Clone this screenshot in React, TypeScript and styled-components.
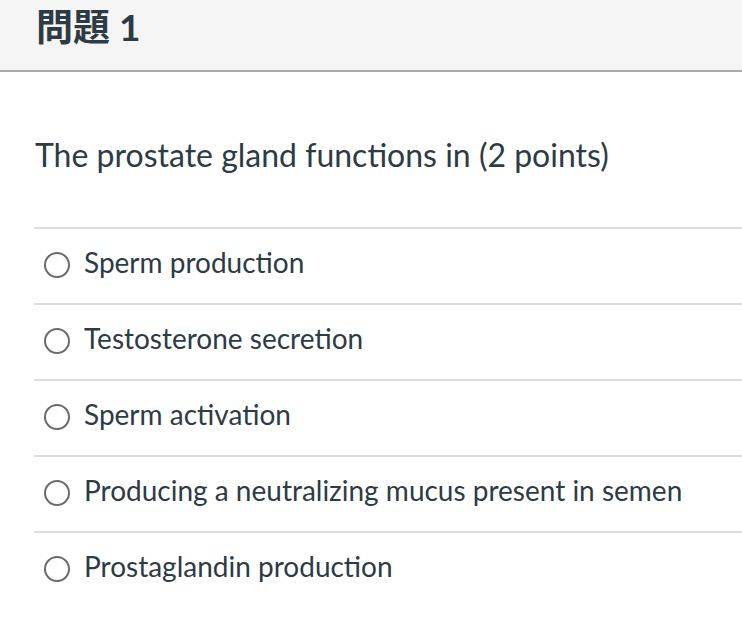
import React from "react";
import styled, { createGlobalStyle } from "styled-components";

const Global = createGlobalStyle`
  html, body { margin: 0; padding: 0; background: #fff; }
  body { font-family: Lato, "Noto Sans CJK TC", sans-serif; color: #2d3b45; }
`;

const Header = styled.header`
  height: 70px;
  background: #f5f5f5;
  border-bottom: 2px solid #aaaaaa;
  padding-left: 36px;
  display: flex;
  align-items: flex-start;
  box-sizing: content-box;
`;

const Title = styled.h2`
  margin: 0;
  padding-top: 5px;
  font-size: 37px;
  line-height: 44px;
  font-weight: 700;
  font-family: Lato, "Noto Sans CJK TC", sans-serif;
  color: #2d3b45;
`;

const Body = styled.div`
  padding: 61px 0 0 34px;
`;

const Question = styled.p`
  margin: 0 0 0 1px;
  font-size: 32px;
  line-height: 44px;
  height: 94px;
`;

const Answers = styled.ul`
  list-style: none;
  margin: 0;
  padding: 0;
`;

const Answer = styled.li`
  box-sizing: border-box;
  border-top: 2px solid #dddddd;
  height: 76px;
  display: flex;
  align-items: center;
  gap: 14px;
  padding-left: 10px;
  padding-bottom: 3px;
`;

const Radio = styled.span`
  width: 22px;
  height: 22px;
  border: 2px solid #6b6b6b;
  border-radius: 50%;
  flex: none;
`;

const Label = styled.span`
  font-size: 28px;
  line-height: 34px;
  padding-bottom: 5px;
`;

const options = [
  "Sperm production",
  "Testosterone secretion",
  "Sperm activation",
  "Producing a neutralizing mucus present in semen",
  "Prostaglandin production",
];

export default function App() {
  return (
    <>
      <Global />
      <Header>
        <Title>問題 1</Title>
      </Header>
      <Body>
        <Question>The prostate gland functions in (2 points)</Question>
        <Answers>
          {options.map((o) => (
            <Answer key={o}>
              <Radio />
              <Label>{o}</Label>
            </Answer>
          ))}
        </Answers>
      </Body>
    </>
  );
}
